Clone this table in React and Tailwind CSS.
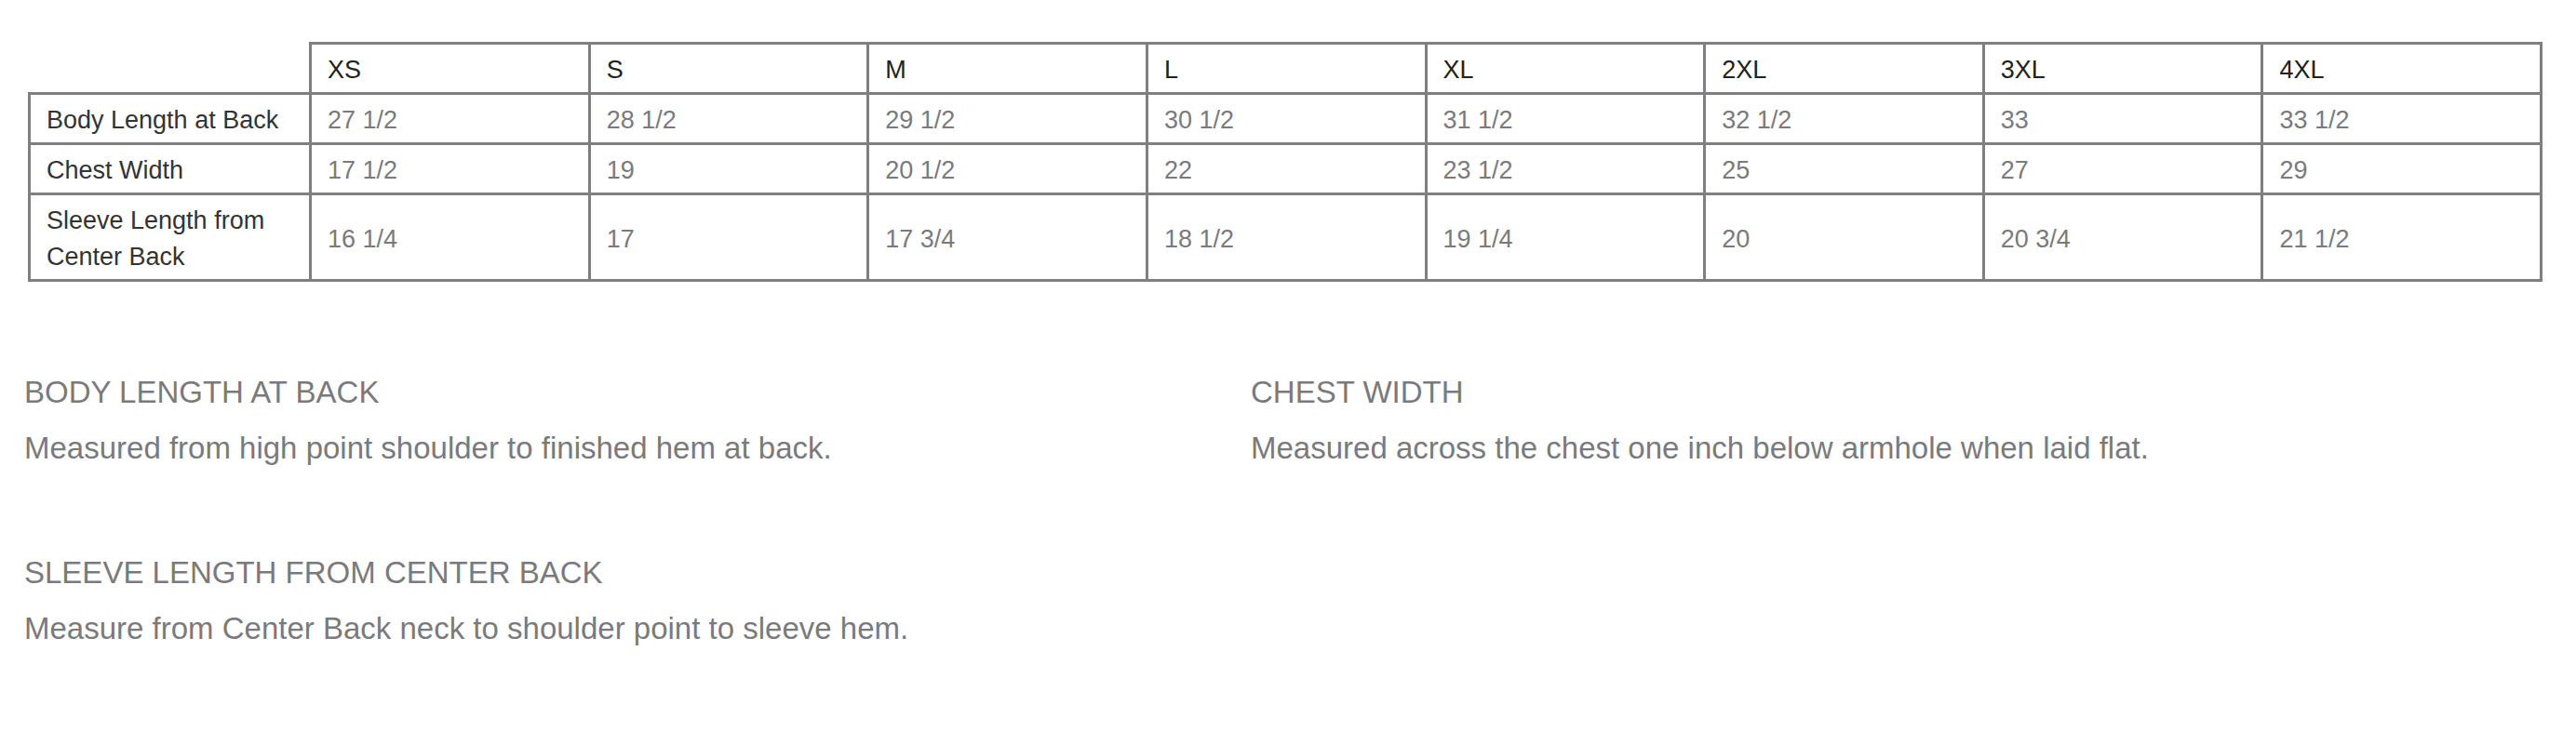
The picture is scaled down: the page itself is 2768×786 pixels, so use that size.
import React from 'react';

const sizes = ['XS', 'S', 'M', 'L', 'XL', '2XL', '3XL', '4XL'];

const rows = [
  { label: 'Body Length at Back', values: ['27 1/2', '28 1/2', '29 1/2', '30 1/2', '31 1/2', '32 1/2', '33', '33 1/2'] },
  { label: 'Chest Width', values: ['17 1/2', '19', '20 1/2', '22', '23 1/2', '25', '27', '29'] },
  { label: 'Sleeve Length from Center Back', values: ['16 1/4', '17', '17 3/4', '18 1/2', '19 1/4', '20', '20 3/4', '21 1/2'] },
];

const notes = [
  { title: 'BODY LENGTH AT BACK', text: 'Measured from high point shoulder to finished hem at back.' },
  { title: 'CHEST WIDTH', text: 'Measured across the chest one inch below armhole when laid flat.' },
  { title: 'SLEEVE LENGTH FROM CENTER BACK', text: 'Measure from Center Back neck to shoulder point to sleeve hem.' },
];

export default function App() {
  return (
    <div className="w-[2768px] h-[786px] bg-white pt-[45px] pl-[26px] font-['Liberation_Sans',Arial,sans-serif]">
      <table className="ml-[4px] w-[2702px] table-fixed border-collapse text-[27px] leading-[39px]">
        <thead>
          <tr>
            <th className="w-[302px] border-r-[3px] border-b-[3px] border-[#7f7f82]"></th>
            {sizes.map(s => (
              <th key={s} className="border-[3px] border-[#7f7f82] pl-[17px] pr-[17px] pt-[8px] pb-[4px] text-left font-normal text-[#222]">
                {s}
              </th>
            ))}
          </tr>
        </thead>
        <tbody>
          {rows.map(r => (
            <tr key={r.label}>
              <td className="border-[3px] border-[#7f7f82] pl-[17px] pr-[17px] pt-[8px] pb-[4px] text-[#333]">{r.label}</td>
              {r.values.map((v, i) => (
                <td key={i} className="border-[3px] border-[#7f7f82] pl-[17px] pr-[17px] pt-[8px] pb-[4px] text-[#7a7a7d]">{v}</td>
              ))}
            </tr>
          ))}
        </tbody>
      </table>

      <div className="mt-[99px] grid grid-cols-[1318px_1fr] gap-y-[94px] text-[#7a7a7d]">
        {notes.map(n => (
          <div key={n.title}>
            <div className="text-[33px] leading-[40px]">{n.title}</div>
            <p className="mt-[20px] text-[33px] leading-[40px]">{n.text}</p>
          </div>
        ))}
      </div>
    </div>
  );
}
